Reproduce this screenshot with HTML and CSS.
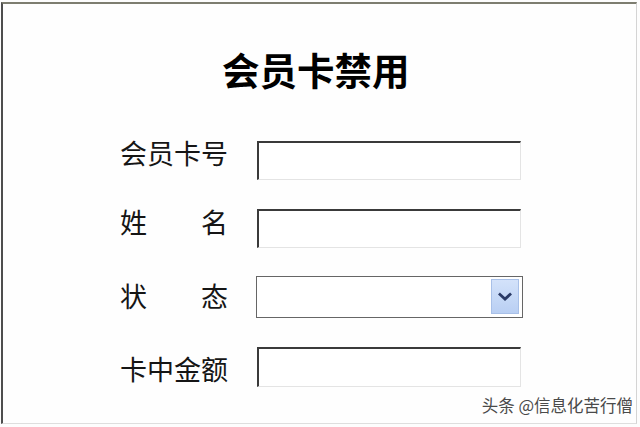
FILE: index.html
```html
<!DOCTYPE html>
<html lang="zh-CN">
<head>
<meta charset="utf-8">
<title>会员卡禁用</title>
<link rel="stylesheet" href="styles.css">
</head>
<body>
<div class="frame">
  <h1 class="title">会员卡禁用</h1>
  <div class="form">
    <div class="row row-1">
      <label class="label"><span>会员卡号</span></label>
      <div class="input"></div>
    </div>
    <div class="row row-2">
      <label class="label"><span>姓</span><span>名</span></label>
      <div class="input"></div>
    </div>
    <div class="row row-3">
      <label class="label"><span>状</span><span>态</span></label>
      <div class="select">
        <div class="select-btn">
          <svg width="14" height="10" viewBox="0 0 14 10"><path d="M2 2.5 L7 7 L12 2.5" fill="none" stroke="#2a3a66" stroke-width="2.8" stroke-linecap="square"/></svg>
        </div>
      </div>
    </div>
    <div class="row row-4">
      <label class="label"><span>卡中金额</span></label>
      <div class="input input-tall"></div>
    </div>
  </div>
  <div class="watermark">头条 @信息化苦行僧</div>
</div>
</body>
</html>
```
FILE: styles.css
```css
html, body {
  margin: 0;
  padding: 0;
  background: #fdfdfd;
}
body {
  width: 640px;
  height: 427px;
  overflow: hidden;
  font-family: "Noto Sans CJK SC", "Noto Sans", sans-serif;
}
.frame {
  position: relative;
  box-sizing: border-box;
  height: 422px;
  margin: 2px 3px 3px 1px;
  border-top: 2px solid #7d7d70;
  border-left: 2px solid #4e4e4e;
  border-right: 1px solid #d4d4d4;
  border-bottom: 1px solid #dedede;
  background: #fefefe;
  padding-top: 43px;
}
.title {
  margin: 0 0 0 219px;
  font-size: 37.5px;
  line-height: 44px;
  font-weight: 700;
  color: #000;
  white-space: nowrap;
}
.form {
  margin-top: 50px;
  padding-left: 117px;
  display: flex;
  flex-direction: column;
  gap: 29px;
}
.row {
  display: flex;
  align-items: flex-start;
}
.label {
  flex: none;
  width: 108px;
  margin-right: 29px;
  display: flex;
  justify-content: space-between;
  font-size: 27px;
  line-height: 27px;
  color: #151515;
  white-space: nowrap;
}
.row-1 .label { margin-top: -2px; }
.row-2 .label { margin-top: -1px; }
.row-3 .label { margin-top: 5px; }
.row-4 .label { margin-top: 8px; }
.input {
  flex: none;
  box-sizing: border-box;
  width: 264px;
  height: 39px;
  background: #fff;
  border-top: 2px solid #3a3a3a;
  border-left: 2px solid #3a3a3a;
  border-right: 1px solid #e4e4e4;
  border-bottom: 1px solid #e4e4e4;
}
.input-tall { height: 40px; }
.select {
  flex: none;
  box-sizing: border-box;
  width: 267px;
  height: 42px;
  margin-left: -1px;
  margin-top: -1px;
  background: #fff;
  border: 1px solid #666;
  display: flex;
  justify-content: flex-end;
  padding: 2px 3px 3px 0;
}
.select-btn {
  box-sizing: border-box;
  width: 28px;
  height: 35px;
  background: linear-gradient(#d3e2fa, #b9cff3);
  border: 1px solid #a8c0e8;
  display: flex;
  align-items: center;
  justify-content: center;
}
.watermark {
  position: absolute;
  right: 3px;
  top: 391px;
  font-size: 16.5px;
  line-height: 20px;
  color: #4a4a4a;
  text-shadow: 0 0 2px #fff, 0 0 2px #fff;
}
```
